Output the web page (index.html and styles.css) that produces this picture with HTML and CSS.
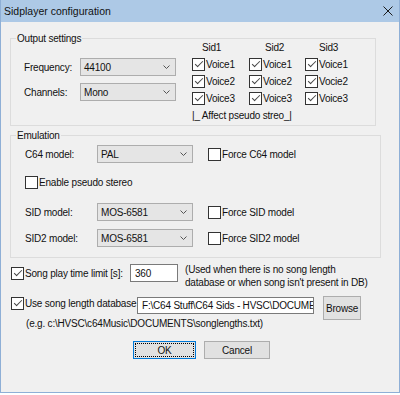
FILE: index.html
```html
<!DOCTYPE html>
<html lang="en">

<head>
    <meta charset="UTF-8">
    <meta name="viewport" content="width=device-width, initial-scale=1.0">
    <title>Sidplayer configuration</title>

    <link rel="stylesheet" href="styles.css">
</head>

<body>
    <div class="window">
        <div class="titlebar">
            <span class="title">Sidplayer configuration</span>
            <svg class="close" width="10" height="10" viewBox="0 0 10 10">
                <path d="M0.5 0.5 L9.5 9.5 M9.5 0.5 L0.5 9.5" stroke="#1b1b1b" stroke-width="1" fill="none" />
            </svg>
        </div>

        <div class="client">
            <!-- output settings -->
            <div class="group output">
                <div class="group-title">Output settings</div>
                <div class="out-left">
                    <div class="field">
                        <span class="lbl">Frequency:</span>
                        <div class="combo"><span>44100</span><svg width="7" height="4" viewBox="0 0 7 4"><path d="M0.5 0.5 L3.5 3.5 L6.5 0.5" stroke="#555" fill="none" /></svg></div>
                    </div>
                    <div class="field">
                        <span class="lbl">Channels:</span>
                        <div class="combo"><span>Mono</span><svg width="7" height="4" viewBox="0 0 7 4"><path d="M0.5 0.5 L3.5 3.5 L6.5 0.5" stroke="#555" fill="none" /></svg></div>
                    </div>
                </div>
                <div class="sid-grid">
                    <span class="sid-head s1">Sid1</span>
                    <span class="sid-head s2">Sid2</span>
                    <span class="sid-head s3">Sid3</span>

                    <label class="check"><span class="cb on"></span>Voice1</label>
                    <label class="check"><span class="cb on"></span>Voice1</label>
                    <label class="check"><span class="cb on"></span>Voice1</label>

                    <label class="check"><span class="cb on"></span>Voice2</label>
                    <label class="check"><span class="cb on"></span>Voice2</label>
                    <label class="check"><span class="cb on"></span>Vocie2</label>

                    <label class="check"><span class="cb on"></span>Voice3</label>
                    <label class="check"><span class="cb on"></span>Voice3</label>
                    <label class="check"><span class="cb on"></span>Voice3</label>

                    <span class="affect">|_ Affect pseudo streo_|</span>
                </div>
            </div>

            <!-- emulation -->
            <div class="group emu">
                <div class="group-title">Emulation</div>
                <div class="emu-row">
                    <span class="lbl">C64 model:</span>
                    <div class="combo"><span>PAL</span><svg width="7" height="4" viewBox="0 0 7 4"><path d="M0.5 0.5 L3.5 3.5 L6.5 0.5" stroke="#555" fill="none" /></svg></div>
                    <label class="check force"><span class="cb"></span>Force C64 model</label>
                </div>
                <div class="emu-row pseudo">
                    <label class="check"><span class="cb"></span>Enable pseudo stereo</label>
                </div>
                <div class="emu-row sid">
                    <span class="lbl">SID model:</span>
                    <div class="combo"><span>MOS-6581</span><svg width="7" height="4" viewBox="0 0 7 4"><path d="M0.5 0.5 L3.5 3.5 L6.5 0.5" stroke="#555" fill="none" /></svg></div>
                    <label class="check force"><span class="cb"></span>Force SID model</label>
                </div>
                <div class="emu-row sid2">
                    <span class="lbl">SID2 model:</span>
                    <div class="combo"><span>MOS-6581</span><svg width="7" height="4" viewBox="0 0 7 4"><path d="M0.5 0.5 L3.5 3.5 L6.5 0.5" stroke="#555" fill="none" /></svg></div>
                    <label class="check force"><span class="cb"></span>Force SID2 model</label>
                </div>
            </div>

            <!-- song length -->
            <div class="limit-row">
                <label class="check"><span class="cb on"></span>Song play time limit [s]:</label>
                <input class="edit time" type="text" value="360" readonly>
                <p class="note">(Used when there is no song length<br>database or when song isn't present in DB)</p>
            </div>

            <div class="db-row">
                <label class="check"><span class="cb on"></span>Use song length database</label>
                <input class="edit path" type="text" value="F:\C64 Stuff\C64 Sids - HVSC\DOCUMENTS\Songlengths.txt" readonly>
                <div class="btn browse">Browse</div>
            </div>
            <p class="example">(e.g. c:\HVSC\c64Music\DOCUMENTS\songlengths.txt)</p>

            <div class="buttons">
                <div class="btn ok">OK</div>
                <div class="btn cancel">Cancel</div>
            </div>
        </div>
    </div>
</body>

</html>
```

FILE: styles.css
```css
* {
    padding: 0;
    margin: 0;
    box-sizing: border-box;
}

body {
    font-family: "Liberation Sans", Arial, sans-serif;
    font-size: 10px;
    letter-spacing: -0.2px;
    color: #111;
    background-color: #fff;
}

.window {
    width: 400px;
    height: 393px;
    border: 1px solid #8eafd6;
    border-top: none;
    background-color: #f0f0f0;
}

.titlebar {
    height: 22px;
    background-color: #adc9e6;
    display: flex;
    align-items: center;
    justify-content: space-between;
    padding: 0 6px 0 3px;
}

.title {
    font-size: 10.5px;
    letter-spacing: 0;
}

.client {
    padding: 16px 0 0 9px;
}

/* group boxes */
.group {
    position: relative;
    border: 1px solid #dcdcdc;
}

.group-title {
    position: absolute;
    top: -7px;
    left: 5px;
    padding: 0 1px;
    line-height: 13px;
    background-color: #f0f0f0;
}

.output {
    width: 366px;
    height: 88px;
    display: flex;
}

.out-left {
    margin: 19px 0 0 13px;
    display: flex;
    flex-direction: column;
    gap: 7px;
}

.field {
    display: flex;
    align-items: center;
}

.lbl {
    width: 56px;
}

.combo {
    width: 96px;
    height: 18px;
    border: 1px solid #adadad;
    background-color: #e5e5e5;
    display: flex;
    align-items: center;
    justify-content: space-between;
    padding: 0 5px 0 3px;
}

.sid-grid {
    margin-left: 16px;
    display: grid;
    grid-template-columns: 57px 56px 60px;
    grid-auto-rows: 17px;
    align-items: center;
}

.sid-head.s1 {
    padding-left: 10px;
}

.sid-head.s2 {
    padding-left: 16px;
}

.sid-head.s3 {
    padding-left: 14px;
}

.affect {
    grid-column: 1 / -1;
    white-space: nowrap;
}

/* checkboxes */
.check {
    display: flex;
    align-items: center;
    gap: 1px;
    white-space: nowrap;
}

.cb {
    width: 13px;
    height: 13px;
    border: 1px solid #333;
    background-color: #fff;
    position: relative;
    flex: none;
}

.cb.on::after {
    content: "";
    position: absolute;
    left: 2px;
    top: 2px;
    width: 7px;
    height: 3px;
    border-left: 1px solid #444;
    border-bottom: 1px solid #444;
    transform: rotate(-45deg);
}

/* emulation */
.emu {
    margin-top: 9px;
    width: 371px;
    height: 123px;
    padding: 9px 0 0 14px;
}

.emu-row {
    display: flex;
    align-items: center;
    height: 18px;
}

.emu .lbl {
    width: 72px;
}

.force {
    margin-left: 15px;
}

.emu-row.pseudo {
    margin-top: 10px;
}

.emu-row.sid {
    margin-top: 12px;
}

.emu-row.sid2 {
    margin-top: 8px;
}

/* song length */
.edit {
    font-family: inherit;
    font-size: 10px;
    letter-spacing: -0.2px;
    color: #111;
    background-color: #fff;
    border: 1px solid #7a7a7a;
    outline: none;
}

.limit-row {
    display: flex;
    align-items: flex-start;
    margin-top: 6px;
    padding-left: 1px;
}

.limit-row .check {
    width: 119px;
    height: 18px;
}

.time {
    width: 48px;
    height: 18px;
    padding-left: 4px;
}

.note {
    margin: -1px 0 0 7px;
    line-height: 13px;
    white-space: nowrap;
}

.db-row {
    display: flex;
    align-items: flex-start;
    margin-top: 7px;
    padding-left: 1px;
}

.db-row .check {
    width: 126px;
    height: 14px;
}

.path {
    width: 177px;
    height: 17px;
    margin-top: 1px;
    padding-left: 4px;
}

.btn {
    height: 18px;
    border: 1px solid #adadad;
    background-color: #e1e1e1;
    display: flex;
    align-items: center;
    justify-content: center;
}

.browse {
    width: 38px;
    height: 24px;
    margin: 0 0 -7px 9px;
}

.example {
    margin-top: 3px;
    padding-left: 16px;
    line-height: 13px;
}

.buttons {
    display: flex;
    margin-top: 11px;
    padding-left: 123px;
}

.ok {
    width: 63px;
    border-color: #0078d7;
    outline: 1px dotted #000;
    outline-offset: -3px;
}

.cancel {
    width: 66px;
    margin-left: 8px;
}
```
